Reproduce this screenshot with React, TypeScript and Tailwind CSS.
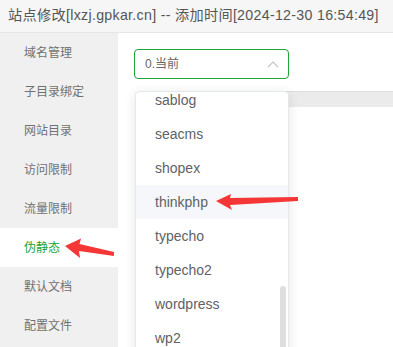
import React from 'react';

const menu = ['域名管理', '子目录绑定', '网站目录', '访问限制', '流量限制', '伪静态', '默认文档', '配置文件'];
const options = ['sablog', 'seacms', 'shopex', 'thinkphp', 'typecho', 'typecho2', 'wordpress', 'wp2'];

const font = { fontFamily: '"Liberation Sans", "Noto Sans CJK SC", sans-serif' };

export default function App() {
  return (
    <div className="relative w-[393px] h-[347px] overflow-hidden bg-white" style={font}>
      {/* title bar */}
      <div className="h-[33px] flex items-center pl-[8px] bg-[#f6f6f6] border-b border-[#e6e6e6] text-[14.2px] tracking-[0.3px] text-[#555] whitespace-nowrap">
        站点修改[lxzj.gpkar.cn] -- 添加时间[2024-12-30 16:54:49]
      </div>

      <div className="flex">
        {/* side menu */}
        <div className="w-[118px] shrink-0 bg-[#f0f0f0] h-[314px]">
          {menu.map((m) => (
            <div
              key={m}
              className={
                m === '伪静态'
                  ? 'h-[39px] flex items-center pl-[24px] text-[12px] bg-white text-[#20a53a]'
                  : 'h-[39px] flex items-center pl-[24px] text-[12px] text-[#707070]'
              }
            >
              {m}
            </div>
          ))}
        </div>

        {/* content */}
        <div className="flex-1 pl-[16px] pt-[16px] min-w-0">
          <div className="w-[155px] h-[30px] border border-[#20a53a] rounded-[4px] flex items-center justify-between pl-[10px] pr-[9px] text-[12px] text-[#666]">
            <span>0.当前</span>
            <svg width="12" height="8" viewBox="0 0 12 8" fill="none">
              <path d="M1 7 L6 2 L11 7" stroke="#c0c4cc" strokeWidth="1.2" />
            </svg>
          </div>
          <div className="mt-[12px] ml-[4px] w-[300px] border-t border-[#ddd]">
            <div className="h-[15px] bg-[#ebebeb]" />
          </div>
        </div>
      </div>

      {/* dropdown */}
      <div className="absolute left-[135px] top-[91px] w-[154px] h-[270px] bg-white border border-[#e4e7ed] rounded-[4px] shadow-[0_2px_12px_rgba(0,0,0,0.1)] overflow-hidden">
        <div className="-mt-[9px]">
          {options.map((o) => (
            <div
              key={o}
              className={
                o === 'thinkphp'
                  ? 'h-[34px] flex items-center pl-[19px] text-[14px] text-[#606266] bg-[#f5f7fa]'
                  : 'h-[34px] flex items-center pl-[19px] text-[14px] text-[#606266]'
              }
            >
              {o}
            </div>
          ))}
        </div>
        <div className="absolute right-[2px] top-[194px] w-[6px] h-[100px] rounded-[3px] bg-[#dddee0]" />
      </div>

      {/* red arrows */}
      <svg className="absolute left-0 top-0 pointer-events-none" width="393" height="347">
        <polygon points="65,246 81,238.5 79.5,244 114,252 114,256 79,251 80,258" fill="#f53636" />
        <polygon points="216,201 231,194 230,198 298,197 298,201 230,205 232,210" fill="#f53636" />
      </svg>
    </div>
  );
}
